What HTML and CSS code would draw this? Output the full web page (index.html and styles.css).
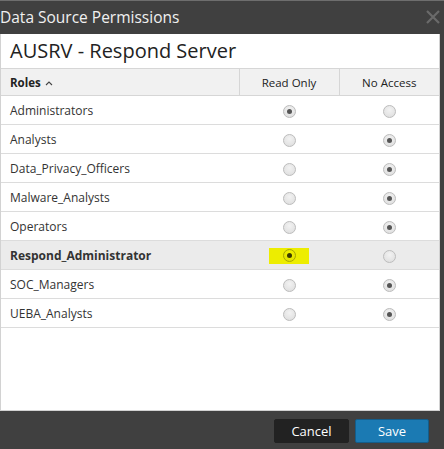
FILE: index.html
```html
<!DOCTYPE html>
<html>
<head>
<meta charset="utf-8">
<link rel="stylesheet" href="styles.css">
</head>
<body>
<div class="dialog">
  <div class="titlebar">
    <span class="title">Data Source Permissions</span>
    <svg class="close" width="16" height="16" viewBox="0 0 16 16"><path d="M2 2 L14 14 M14 2 L2 14" stroke="#6a6a6a" stroke-width="2.2"/></svg>
  </div>
  <div class="panel">
    <h1 class="heading">AUSRV - Respond Server</h1>
    <table class="grid">
      <colgroup>
        <col class="w-role">
        <col class="w-opt">
        <col>
      </colgroup>
      <thead>
        <tr>
          <th class="col-role">Roles <svg class="caret" width="8" height="6" viewBox="0 0 8 6"><path d="M1 5 L4 2 L7 5" fill="none" stroke="#444" stroke-width="1.1"/></svg></th>
          <th class="col-opt">Read Only</th>
          <th class="col-opt">No Access</th>
        </tr>
      </thead>
      <tbody>
        <tr><td>Administrators</td><td class="c"><span class="radio on"></span></td><td class="c"><span class="radio"></span></td></tr>
        <tr><td>Analysts</td><td class="c"><span class="radio"></span></td><td class="c"><span class="radio on"></span></td></tr>
        <tr><td>Data_Privacy_Officers</td><td class="c"><span class="radio"></span></td><td class="c"><span class="radio on"></span></td></tr>
        <tr><td>Malware_Analysts</td><td class="c"><span class="radio"></span></td><td class="c"><span class="radio on"></span></td></tr>
        <tr><td>Operators</td><td class="c"><span class="radio"></span></td><td class="c"><span class="radio on"></span></td></tr>
        <tr class="sel"><td>Respond_Administrator</td><td class="c"><span class="hl"><span class="radio on"></span></span></td><td class="c"><span class="radio"></span></td></tr>
        <tr><td>SOC_Managers</td><td class="c"><span class="radio"></span></td><td class="c"><span class="radio on"></span></td></tr>
        <tr><td>UEBA_Analysts</td><td class="c"><span class="radio"></span></td><td class="c"><span class="radio on"></span></td></tr>
      </tbody>
    </table>
  </div>
  <div class="footer">
    <button class="btn cancel">Cancel</button>
    <button class="btn save">Save</button>
  </div>
</div>
</body>
</html>
```
FILE: styles.css
```css
html, body {
  margin: 0;
  padding: 0;
  background: #404040;
  font-family: "Open Sans", "Liberation Sans", sans-serif;
}
.dialog {
  width: 444px;
  height: 449px;
  display: flex;
  flex-direction: column;
  border-top: 1px solid #6e6e6e;
  box-sizing: border-box;
}
.titlebar {
  height: 33px;
  display: flex;
  align-items: center;
  justify-content: space-between;
  padding: 0 3px 0 0;
}
.title {
  color: #f0f0f0;
  font-size: 15.5px;
  margin-left: 0;
  margin-top: -1px;
}
.close {
  margin-top: -1px;
}
.panel {
  height: 377px;
  width: 440px;
  box-sizing: border-box;
  background: #fff;
  border: 1px solid #d2d2d2;
  border-top: none;
}
.heading {
  margin: 0;
  font-weight: normal;
  font-size: 20px;
  color: #222;
  height: 34px;
  line-height: 34px;
  padding-left: 9px;
}
.grid {
  width: 100%;
  table-layout: fixed;
  border-collapse: collapse;
  font-size: 12px;
  color: #333;
}
.w-role { width: 238px; }
.w-opt { width: 100px; }
.grid th {
  background: #f1f1f1;
  height: 26px;
  font-size: 11.5px;
  font-weight: normal;
  color: #222;
  border: 1px solid #d6d6d6;
  border-left: none;
  padding: 0;
}
.grid th:last-child { border-right: none; }
.col-role {
  text-align: left;
  padding-left: 9px !important;
  font-weight: bold !important;
}
.caret {
  margin-left: 1px;
  vertical-align: 1px;
}
.col-opt {
  text-align: center;
}
.grid td {
  height: 28px;
  padding: 0 0 0 9px;
  border-bottom: 1px solid #dcdcdc;
}
.grid td.c {
  padding: 0;
  text-align: center;
}
.grid tr.sel td {
  background: #ebebeb;
  font-weight: bold;
}
.radio {
  display: inline-block;
  width: 13px;
  height: 13px;
  border-radius: 50%;
  box-sizing: border-box;
  border: 1px solid #bdbdbd;
  background: radial-gradient(circle at 50% 35%, #f2f2f2 0%, #dcdcdc 100%);
  vertical-align: middle;
  position: relative;
}
.radio.on::after {
  content: "";
  position: absolute;
  left: 3px;
  top: 3px;
  width: 5px;
  height: 5px;
  border-radius: 50%;
  background: #555;
}
.hl {
  display: inline-block;
  width: 40px;
  height: 16px;
  line-height: 16px;
  background: #eded00;
  vertical-align: middle;
}
.hl .radio {
  border-color: #a8a800;
  background: radial-gradient(circle at 50% 35%, #f4f400 0%, #dcdc00 100%);
  vertical-align: -2px;
}
.hl .radio.on::after { background: #3a3a00; }
.footer {
  flex: 1;
  display: flex;
  justify-content: flex-end;
  align-items: flex-start;
  padding: 8px 15px 0 0;
  gap: 6px;
}
.btn {
  font-family: "Open Sans", "Liberation Sans", sans-serif;
  font-size: 13px;
  color: #fff;
  width: 75px;
  height: 24px;
  border-radius: 2px;
  padding: 0;
  cursor: pointer;
}
.cancel {
  background: #222;
  border: 1px solid #222;
}
.save {
  background: #1b7ab3;
  border: 1px solid #145d8a;
  width: 74px;
}
```
